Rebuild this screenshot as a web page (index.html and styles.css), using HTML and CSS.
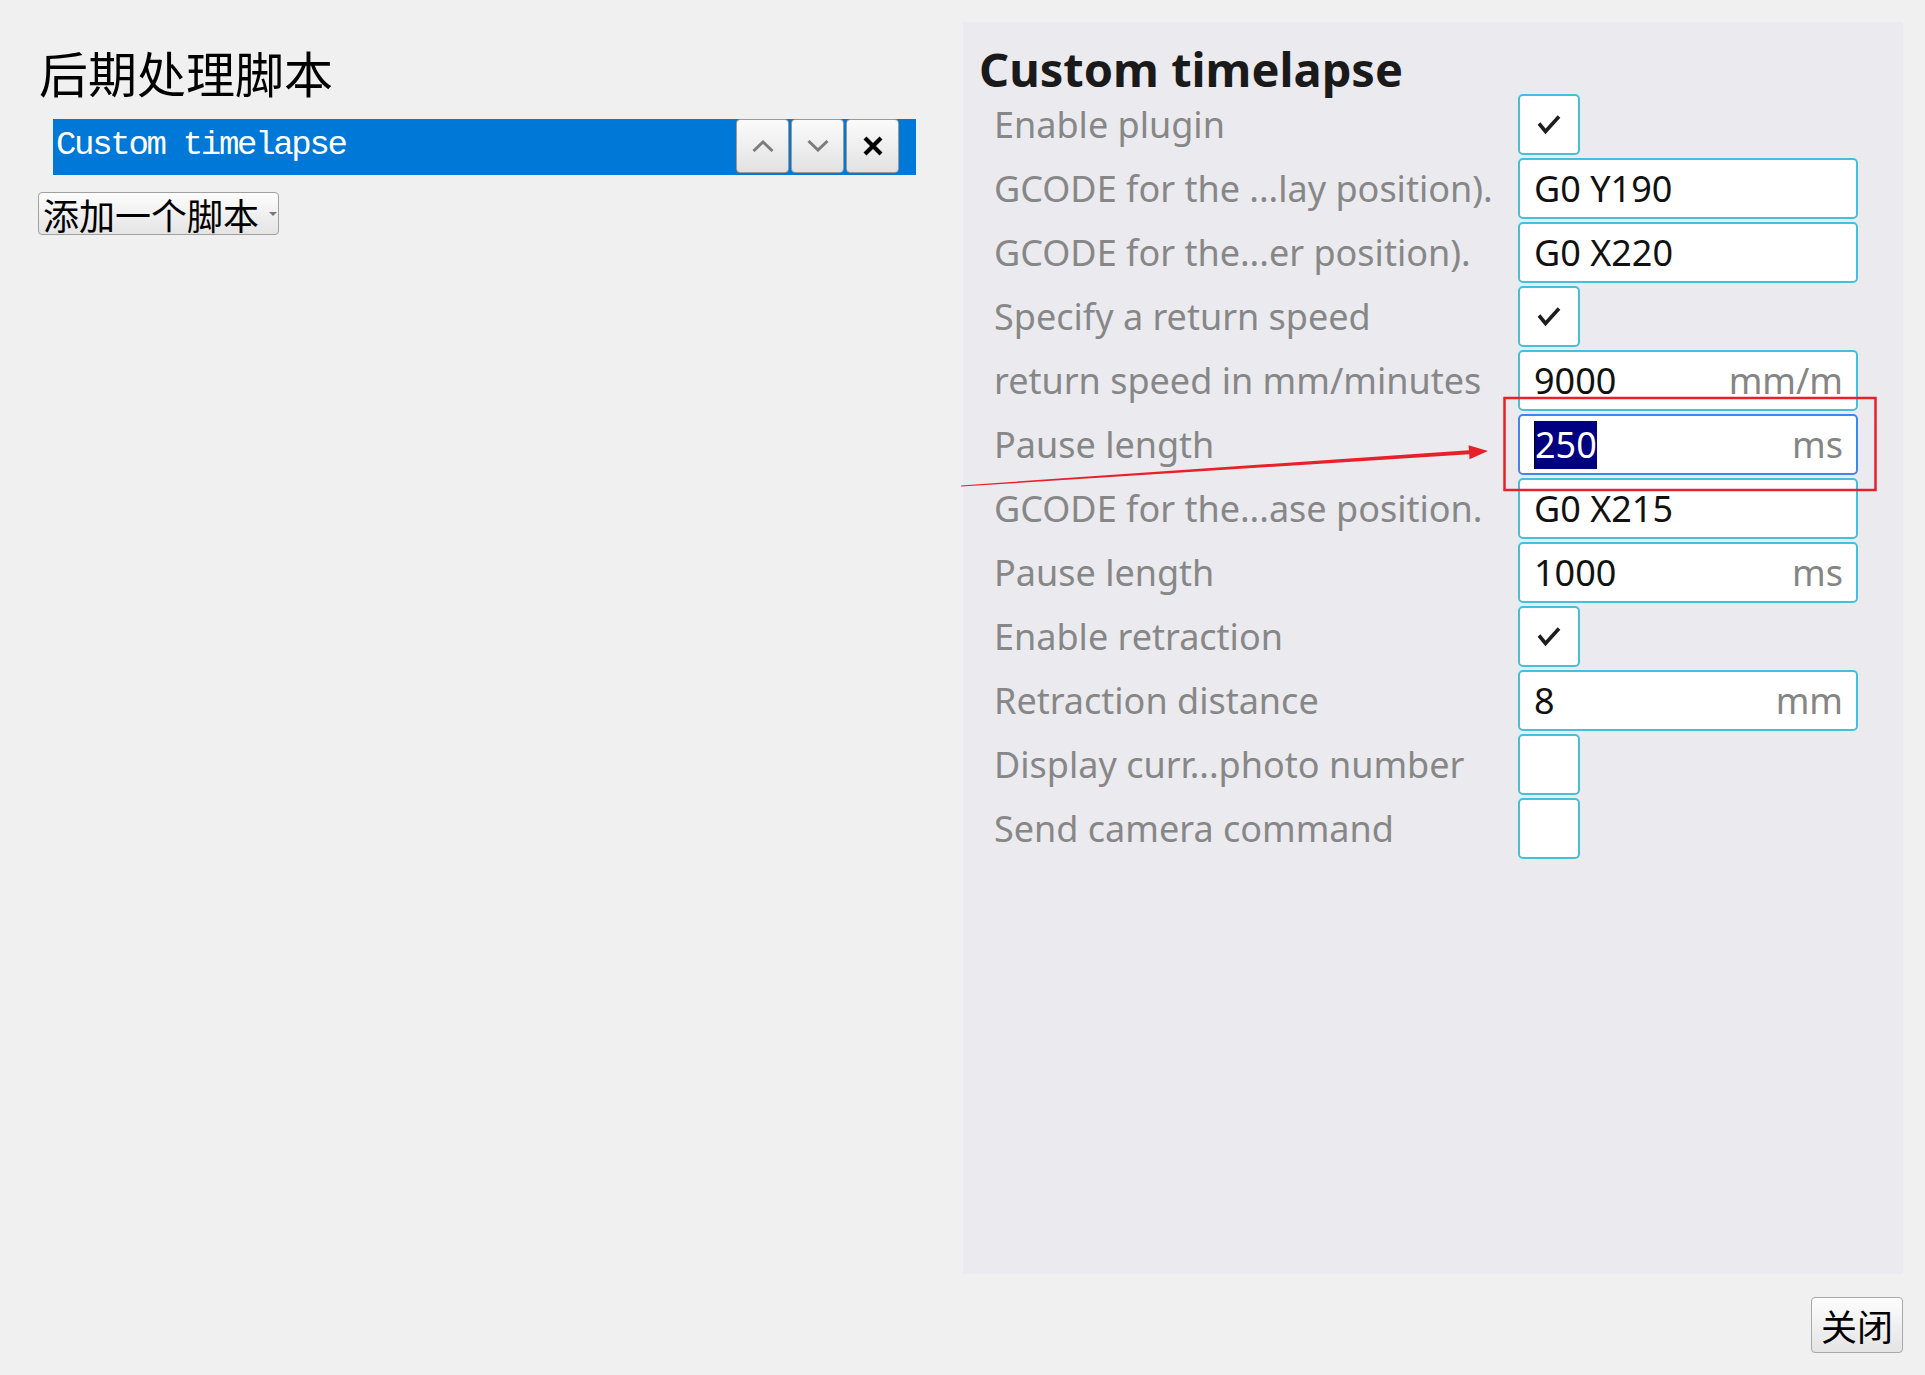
FILE: index.html
```html
<!DOCTYPE html>
<html lang="zh-CN">
<head>
<meta charset="utf-8">
<title>后期处理脚本</title>
<link rel="stylesheet" href="styles.css">
</head>
<body>
<div class="app">
  <div class="main">
    <section class="scripts">
      <h1 class="scripts-title">后期处理脚本</h1>
      <div class="script-item">
        <span class="script-name">Custom timelapse</span>
        <div class="item-buttons">
          <button class="item-btn" aria-label="上移"><svg width="22" height="12" viewBox="0 0 22 12"><polyline points="1.5,11 11,2 20.5,11" fill="none" stroke="#7d7d7d" stroke-width="3"/></svg></button>
          <button class="item-btn" aria-label="下移"><svg width="22" height="12" viewBox="0 0 22 12"><polyline points="1.5,1 11,10 20.5,1" fill="none" stroke="#7d7d7d" stroke-width="3"/></svg></button>
          <button class="item-btn" aria-label="删除"><svg width="20" height="20" viewBox="0 0 20 20"><path d="M2 2 L18 18 M18 2 L2 18" fill="none" stroke="#000" stroke-width="4.2"/></svg></button>
        </div>
      </div>
      <button class="add-btn">添加一个脚本<span class="caret"></span></button>
    </section>
    <section class="settings">
      <h2 class="settings-title">Custom timelapse</h2>
      <div class="form">
        <div class="row"><span class="label">Enable plugin</span><span class="check"><svg width="24" height="19" viewBox="0 0 24 19"><path d="M2 8.5 L8.5 16.5 L22 1.5" fill="none" stroke="#1e1e1e" stroke-width="3.6"/></svg></span></div>
        <div class="row"><span class="label">GCODE for the ...lay position).</span><span class="field"><span>G0 Y190</span></span></div>
        <div class="row"><span class="label">GCODE for the...er position).</span><span class="field"><span>G0 X220</span></span></div>
        <div class="row"><span class="label">Specify a return speed</span><span class="check"><svg width="24" height="19" viewBox="0 0 24 19"><path d="M2 8.5 L8.5 16.5 L22 1.5" fill="none" stroke="#1e1e1e" stroke-width="3.6"/></svg></span></div>
        <div class="row"><span class="label">return speed in mm/minutes</span><span class="field"><span>9000</span><span class="unit">mm/m</span></span></div>
        <div class="row"><span class="label">Pause length</span><span class="field focused"><span class="sel">250</span><span class="unit">ms</span></span></div>
        <div class="row"><span class="label">GCODE for the...ase position.</span><span class="field"><span>G0 X215</span></span></div>
        <div class="row"><span class="label">Pause length</span><span class="field"><span>1000</span><span class="unit">ms</span></span></div>
        <div class="row"><span class="label">Enable retraction</span><span class="check"><svg width="24" height="19" viewBox="0 0 24 19"><path d="M2 8.5 L8.5 16.5 L22 1.5" fill="none" stroke="#1e1e1e" stroke-width="3.6"/></svg></span></div>
        <div class="row"><span class="label">Retraction distance</span><span class="field"><span>8</span><span class="unit">mm</span></span></div>
        <div class="row"><span class="label">Display curr...photo number</span><span class="check"></span></div>
        <div class="row"><span class="label">Send camera command</span><span class="check"></span></div>
      </div>
    </section>
  </div>
  <div class="footer">
    <button class="close-btn">关闭</button>
  </div>
  <svg class="annotation" width="1925" height="1375" viewBox="0 0 1925 1375">
    <rect x="1504.5" y="398" width="371" height="92" fill="none" stroke="#e8202a" stroke-width="2.5"/>
    <polygon points="961,485.4 1469,450.2 1468.5,445.3 1488,451 1469.5,459.3 1469.2,454.2 961,486.6" fill="#e8202a"/>
  </svg>
</div>
</body>
</html>
```

FILE: styles.css
```css
html, body {
  margin: 0;
  padding: 0;
}

body {
  background: #f0f0f0;
  width: 1925px;
  height: 1375px;
  overflow: hidden;
}

.app {
  position: relative;
  box-sizing: border-box;
  height: 1375px;
  padding: 22px;
  display: flex;
  flex-direction: column;
}

.main {
  flex: 1;
  min-height: 0;
  display: grid;
  grid-template-columns: 1fr 940px;
}

/* left column */
.scripts {
  padding: 20px 0 0 17px;
}

.scripts-title {
  margin: 0;
  font: 400 49px/59px "Noto Sans CJK SC", sans-serif;
  color: #000;
}

.script-item {
  box-sizing: border-box;
  margin: 18px 0 0 14px;
  width: 863px;
  height: 56px;
  background: #0078d7;
  display: flex;
  justify-content: space-between;
  align-items: flex-start;
  padding-right: 17px;
}

.script-name {
  font: 34px/1 "Liberation Mono", monospace;
  letter-spacing: -2.3px;
  color: #fff;
  padding: 9px 0 0 3px;
}

.item-buttons {
  display: flex;
  gap: 2px;
}

.item-btn {
  box-sizing: border-box;
  width: 53px;
  height: 54px;
  padding: 0;
  border: 1px solid #9a9a9a;
  border-radius: 4px;
  background: linear-gradient(#fbfbfb, #e2e2e2);
  display: flex;
  align-items: center;
  justify-content: center;
}

.add-btn {
  box-sizing: border-box;
  margin: 17px 0 0 -1px;
  height: 43px;
  width: 241px;
  padding: 0 0 0 4px;
  border: 1px solid #a0a0a0;
  border-radius: 4px;
  background: linear-gradient(#fdfdfd, #e4e4e4);
  font: 400 36px/1 "Noto Sans CJK SC", sans-serif;
  color: #000;
  display: flex;
  align-items: center;
}

.caret {
  margin-left: 10px;
  width: 0;
  height: 0;
  border-left: 4px solid transparent;
  border-right: 4px solid transparent;
  border-top: 4px solid #777;
}

/* right panel */
.settings {
  background: #eaeaef;
  padding: 23px 0 0 16px;
}

.settings-title {
  margin: 0;
  font: 700 47px/48px "Noto Sans", sans-serif;
  color: #1a1a1a;
}

.form {
  display: flex;
  flex-direction: column;
  gap: 3px;
  margin: 1px 0 0 15px;
}

.row {
  display: flex;
  align-items: center;
  height: 61px;
}

.label {
  width: 524px;
  font: 400 36px "Noto Sans", sans-serif;
  line-height: 58px;
  color: #878787;
  white-space: nowrap;
}

.field {
  box-sizing: border-box;
  width: 340px;
  height: 61px;
  border: 2px solid #47bfdb;
  border-radius: 5px;
  background: #fff;
  display: flex;
  align-items: center;
  justify-content: space-between;
  padding: 0 13px 0 14px;
  font: 400 36px "Noto Sans", sans-serif;
  color: #111;
}

.field.focused {
  border-color: #3e86f2;
}

.unit {
  color: #858585;
}

.sel {
  display: inline-block;
  line-height: 48px;
  background: #000080;
  color: #fff;
  border-left: 1px solid #000;
}

.check {
  box-sizing: border-box;
  width: 62px;
  height: 61px;
  border: 2px solid #47bfdb;
  border-radius: 5px;
  background: #fff;
  display: flex;
  align-items: center;
  justify-content: center;
}

/* footer */
.footer {
  display: flex;
  justify-content: flex-end;
  margin-top: 23px;
}

.close-btn {
  box-sizing: border-box;
  width: 92px;
  height: 56px;
  padding: 0;
  border: 1px solid #a8a8a8;
  border-radius: 4px;
  background: linear-gradient(#fdfdfd, #e4e4e4);
  font: 400 36px/1 "Noto Sans CJK SC", sans-serif;
  color: #000;
}

.annotation {
  position: absolute;
  top: 0;
  left: 0;
  pointer-events: none;
}
```
